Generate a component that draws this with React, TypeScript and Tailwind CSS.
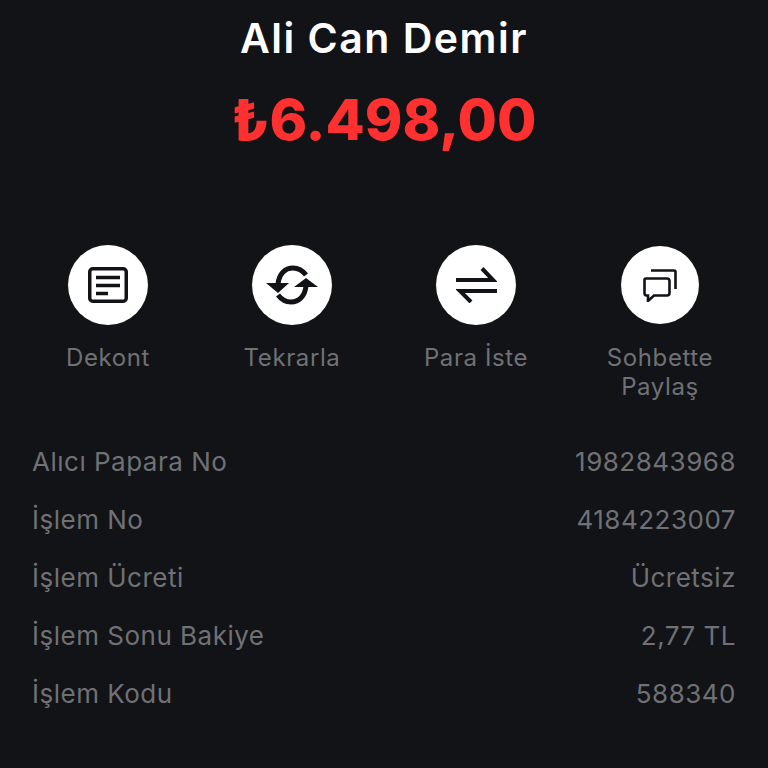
const actions = [
  { label: "Dekont", circle: "h-20 w-20", icon: <DocIcon /> },
  { label: "Tekrarla", circle: "h-20 w-20", icon: <RepeatIcon /> },
  { label: "Para İste", circle: "h-20 w-20", icon: <SwapIcon /> },
  { label: "Sohbette Paylaş", circle: "h-[78px] w-[78px]", icon: <ChatIcon /> },
];

const rows = [
  ["Alıcı Papara No", "1982843968"],
  ["İşlem No", "4184223007"],
  ["İşlem Ücreti", "Ücretsiz"],
  ["İşlem Sonu Bakiye", "2,77 TL"],
  ["İşlem Kodu", "588340"],
];

function DocIcon() {
  return (
    <svg width="40" height="36" viewBox="0 0 40 36" fill="none">
      <rect x="1.75" y="1.75" width="36.5" height="32.5" rx="3" stroke="#121317" strokeWidth="3.5" />
      <path d="M8 10.5H32M8 18.5H32M8 26.5H20" stroke="#121317" strokeWidth="3.5" />
    </svg>
  );
}

function RepeatIcon() {
  return (
    <svg width="52" height="40" viewBox="0 0 52 40" fill="none">
      <path d="M12 19C13 9 19 3 27 3C33 3 37 6 40 10" stroke="#121317" strokeWidth="5" />
      <path d="M40 21C39 31 33 37 25 37C19 37 15 34 12 30" stroke="#121317" strokeWidth="5" />
      <path d="M0 18H23L12 28Z" fill="#121317" />
      <path d="M28 22H52L40 13Z" fill="#121317" />
    </svg>
  );
}

function SwapIcon() {
  return (
    <svg width="41" height="36" viewBox="0 0 41 36" fill="none">
      <path d="M0 13H37L26 1.5" stroke="#121317" strokeWidth="4" />
      <path d="M41 24H4L15 35" stroke="#121317" strokeWidth="4" />
    </svg>
  );
}

function ChatIcon() {
  return (
    <svg width="34" height="33" viewBox="0 0 34 33" fill="none">
      <path d="M8 1.5H31C32 1.5 32.5 2 32.5 3V20" stroke="#121317" strokeWidth="2.6" />
      <path
        d="M3 9.5H24C25.5 9.5 26.5 10.5 26.5 12V24C26.5 25.5 25.5 26.5 24 26.5H11L5 32V26.5H3.5C2.2 26.5 1.5 25.5 1.5 24V11C1.5 10 2 9.5 3 9.5Z"
        stroke="#121317"
        strokeWidth="2.6"
      />
    </svg>
  );
}

export default function App() {
  return (
    <div className="h-[768px] w-[768px] overflow-hidden bg-[#121317] font-['Inter',sans-serif]">
      <div className="flex flex-col items-center pt-[12px]">
        <h1 className="text-[41px] leading-[52px] font-semibold tracking-[1.5px] text-white">Ali Can Demir</h1>
        <div className="mt-[20px] text-[57px] leading-[72px] font-extrabold text-[#ff3030]">₺6.498,00</div>
      </div>

      {/* Actions */}
      <div className="mt-[89px] grid grid-cols-4 px-[16px]">
        {actions.map((action) => (
          <div key={action.label} className="flex flex-col items-center">
            <div className="flex h-20 items-center">
              <div className={`flex items-center justify-center rounded-full bg-white ${action.circle}`}>
                {action.icon}
              </div>
            </div>
            <div className="mt-[18px] w-[130px] text-center text-[24px] leading-[29px] tracking-[0.6px] text-[#6f7175]">
              {action.label}
            </div>
          </div>
        ))}
      </div>

      {/* Details */}
      <div className="mt-[45px] flex flex-col gap-[26px] px-[32px]">
        {rows.map(([label, value]) => (
          <div key={label} className="flex items-center justify-between text-[26px] leading-[32px] tracking-[0.5px] text-[#6f7175]">
            <span>{label}</span>
            <span>{value}</span>
          </div>
        ))}
      </div>
    </div>
  );
}
